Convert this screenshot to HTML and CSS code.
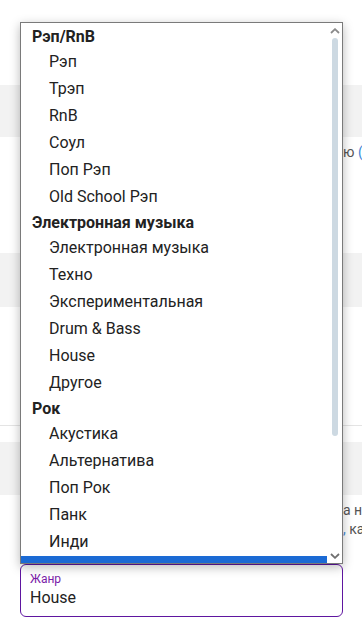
FILE: index.html
```html
<!DOCTYPE html>
<html lang="ru">
<head>
<meta charset="utf-8">
<title>Жанр</title>
<link rel="stylesheet" href="styles.css">
</head>
<body>
<div class="page">
  <div class="top"></div>
  <div class="band"></div>
  <div class="section s1">
    <p class="note"><span class="clip">Выберите жанр, который подходит треку по описани</span>ю <span class="lnk">(</span></p>
  </div>
  <div class="band b2"></div>
  <div class="section s2"></div>
  <div class="band b3"></div>
  <div class="section s3">
    <p class="note"><span class="clip">Если жанра нет в списке, выберите ближайший и ег</span>а на</p>
    <p class="note"><span class="clip">Подробнее о жанрах читайте в <span class="lnk">справке</span></span><span class="lnk">,</span> ка</p>
  </div>
  <div class="field">
    <span class="field-label">Жанр</span>
    <span class="field-value">House</span>
  </div>
</div>

<div class="listbox">
  <ul class="options">
    <li class="group">Рэп/RnB</li>
    <li class="opt">Рэп</li>
    <li class="opt">Трэп</li>
    <li class="opt">RnB</li>
    <li class="opt">Соул</li>
    <li class="opt">Поп Рэп</li>
    <li class="opt">Old School Рэп</li>
    <li class="group">Электронная музыка</li>
    <li class="opt">Электронная музыка</li>
    <li class="opt">Техно</li>
    <li class="opt">Экспериментальная</li>
    <li class="opt">Drum &amp; Bass</li>
    <li class="opt">House</li>
    <li class="opt">Другое</li>
    <li class="group">Рок</li>
    <li class="opt">Акустика</li>
    <li class="opt">Альтернатива</li>
    <li class="opt">Поп Рок</li>
    <li class="opt">Панк</li>
    <li class="opt">Инди</li>
    <li class="opt selected">Тяжёлый Рок</li>
    <li class="opt">Металл</li>
  </ul>
  <div class="scrollbar">
    <svg class="arrow" width="10" height="6" viewBox="0 0 10 6"><path d="M1 5 L5 1.2 L9 5" fill="none" stroke="#8a8a8a" stroke-width="1.8"/></svg>
    <div class="track"><div class="thumb"></div></div>
    <svg class="arrow" width="10" height="6" viewBox="0 0 10 6"><path d="M1 1 L5 4.8 L9 1" fill="none" stroke="#6f6f6f" stroke-width="1.8"/></svg>
  </div>
</div>
</body>
</html>
```

FILE: styles.css
```css
* { box-sizing: border-box; }
html, body {
  margin: 0;
  padding: 0;
  background: #fff;
  font-family: Roboto, "Noto Sans", Arial, sans-serif;
  color: #222;
}
.page {
  width: 362px;
  height: 638px;
  overflow: hidden;
  position: relative;
}
.top { height: 85px; }
.band {
  height: 52px;
  background: #f2f2f2;
}
.b2 { height: 54px; }
.b3 { height: 53px; margin-top: 16px; }
.section { background: #fff; }
.s1 { height: 116px; padding-top: 6px; }
.s2 {
  height: 119px;
  border-bottom: 1px solid #e4e4e4;
}
.s3 { height: 69px; padding-top: 6px; }
.note {
  margin: 0;
  padding-left: 24px;
  font-size: 14px;
  line-height: 19px;
  color: #555;
  white-space: nowrap;
}
.clip {
  display: inline-block;
  width: 319px;
  overflow: hidden;
  vertical-align: bottom;
  white-space: nowrap;
}
.lnk { color: #3d86d6; }

.field {
  margin-left: 20px;
  width: 323px;
  height: 53px;
  border: 1.5px solid #5f16a0;
  border-radius: 6px;
  padding: 6px 9px 0;
  display: flex;
  flex-direction: column;
}
.field-label {
  font-size: 12px;
  line-height: 16px;
  color: #7a1ca8;
}
.field-value {
  font-size: 16px;
  line-height: 21px;
  color: #222;
}

.listbox {
  position: absolute;
  left: 20px;
  top: 22px;
  width: 323px;
  height: 542px;
  border: 1px solid #7a7a7a;
  background: #fff;
  box-shadow: 0 3px 10px rgba(0, 0, 0, 0.28);
  display: flex;
}
.options {
  list-style: none;
  margin: 0;
  padding: 2px 0 0;
  flex: 1;
  overflow: hidden;
  font-size: 16px;
}
.group {
  font-weight: 700;
  height: 24px;
  line-height: 22px;
  padding: 1px 0 0 11px;
  color: #222;
}
.opt {
  height: 27px;
  line-height: 26px;
  padding: 0 0 1px 28px;
  color: #222;
  white-space: nowrap;
}
.selected {
  background: #1b6ad4;
  color: #fff;
  padding-top: 1px;
}
.scrollbar {
  width: 15px;
  display: flex;
  flex-direction: column;
  align-items: center;
  padding: 5px 0 4px;
}
.arrow { flex: none; }
.track {
  flex: 1;
  width: 100%;
  display: flex;
  justify-content: center;
  padding-top: 4px;
}
.thumb {
  width: 6px;
  height: 398px;
  border-radius: 3px;
  background: #cdd9e2;
}
```
